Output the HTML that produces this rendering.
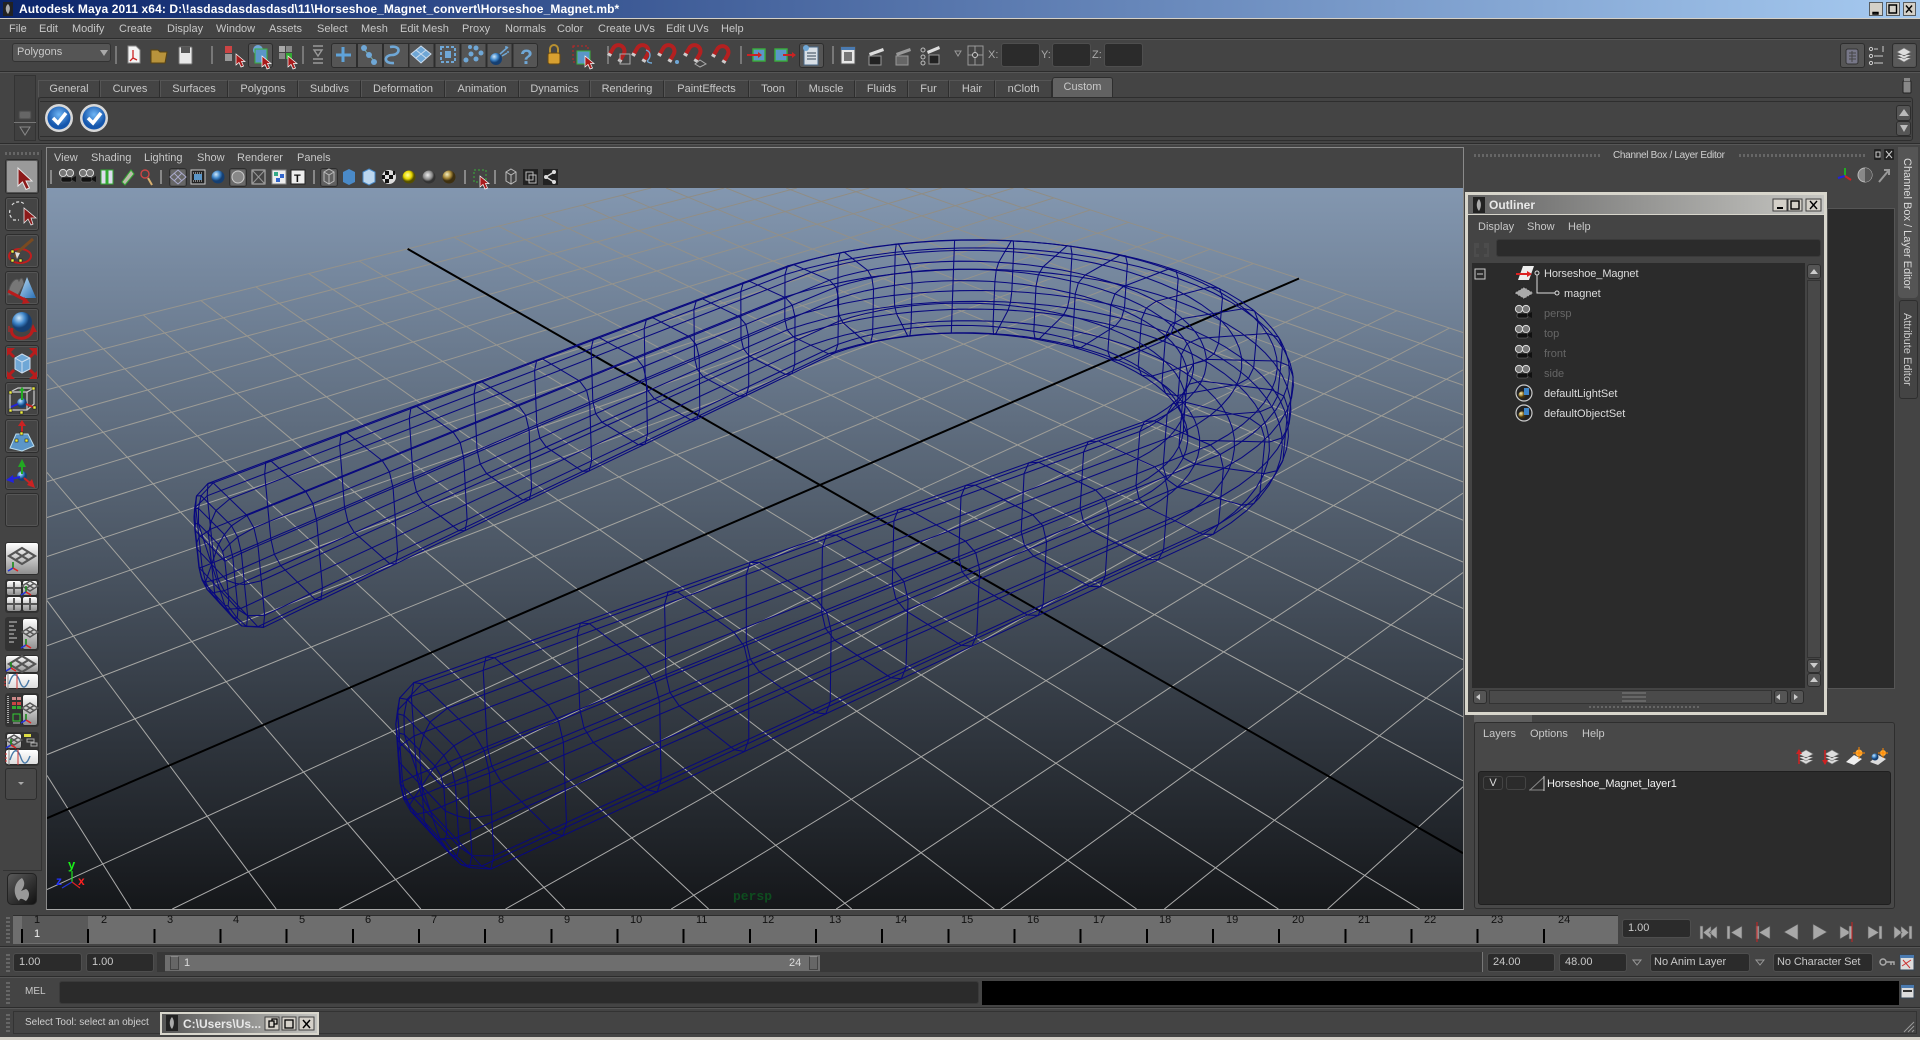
<!DOCTYPE html>
<html><head><meta charset="utf-8"><title>Autodesk Maya 2011</title>
<style>
html,body{margin:0;padding:0;background:#444;width:1920px;height:1040px;overflow:hidden}
body{position:relative;font:11px/14px "Liberation Sans",sans-serif;color:#c8c8c8}
.a,.t,.f,.b,.tab,.w{position:absolute;box-sizing:border-box}
.t{white-space:pre;line-height:14px}
.f{background:#2b2b2b;border:1px solid #4e4e4e;border-radius:3px;color:#c8c8c8;padding-left:5px;line-height:17px}
.b{background:#444;border:1px solid #2d2d2d;border-radius:3px;box-shadow:inset 0 0 0 1px #555}
.w{background:linear-gradient(#fff,#8f8f8f);border:1px solid #2d2d2d;border-radius:3px}
.tab{top:80px;height:17px;text-align:center;line-height:16px;border-right:1px solid #2e2e2e;border-left:1px solid #555;border-top:1px solid #555}
.gx{background:repeating-linear-gradient(90deg,#666 0 2px,transparent 2px 4px)}
.gy{background:repeating-linear-gradient(0deg,#666 0 2px,transparent 2px 4px)}
.hl{left:0;width:1920px;height:1px;background:#2c2c2c;box-shadow:0 1px 0 #565656}
</style></head><body>
<!-- title bar -->
<div class="a" style="left:0;top:0;width:1920px;height:18px;background:linear-gradient(90deg,#0a246a,#a6caf0)"></div>
<div class="a" style="left:0;top:18px;width:1920px;height:1px;background:#d4d0c8"></div>
<div class="t" style="left:19px;top:2px;color:#fff;font-weight:bold;font-size:12px;letter-spacing:.095px">Autodesk Maya 2011 x64: D:\!asdasdasdasdasd\11\Horseshoe_Magnet_convert\Horseshoe_Magnet.mb*</div>
<!-- menu -->
<div class="t" style="left:9px;top:22px">File</div><div class="t" style="left:39px;top:22px">Edit</div><div class="t" style="left:72px;top:22px">Modify</div><div class="t" style="left:119px;top:22px">Create</div><div class="t" style="left:167px;top:22px">Display</div><div class="t" style="left:216px;top:22px">Window</div><div class="t" style="left:269px;top:22px">Assets</div><div class="t" style="left:317px;top:22px">Select</div><div class="t" style="left:361px;top:22px">Mesh</div><div class="t" style="left:400px;top:22px">Edit Mesh</div><div class="t" style="left:462px;top:22px">Proxy</div><div class="t" style="left:505px;top:22px">Normals</div><div class="t" style="left:557px;top:22px">Color</div><div class="t" style="left:598px;top:22px">Create UVs</div><div class="t" style="left:666px;top:22px">Edit UVs</div><div class="t" style="left:721px;top:22px">Help</div>
<div class="a hl" style="top:38px"></div>
<div class="a hl" style="top:71px"></div>
<div class="a hl" style="top:143px"></div>
<!-- toolbar -->
<div class="f" style="left:12px;top:43px;width:99px;height:19px;background:#555;border-color:#333;line-height:16px;padding-left:4px">Polygons</div>
<div class="b" style="left:248px;top:43px;width:25px;height:25px;background:#555"></div>
<div class="b" style="left:331px;top:43px;width:207px;height:25px;background:repeating-linear-gradient(90deg,#555 0 24px,#2d2d2d 24px 25.9px);box-shadow:none"></div>
<div class="b" style="left:799px;top:43px;width:25px;height:25px;background:#555"></div>
<div class="t" style="left:988px;top:48px;color:#aaa">X:</div><div class="f" style="left:1001px;top:43px;width:39px;height:24px"></div>
<div class="t" style="left:1041px;top:48px;color:#aaa">Y:</div><div class="f" style="left:1052px;top:43px;width:39px;height:24px"></div>
<div class="t" style="left:1092px;top:48px;color:#aaa">Z:</div><div class="f" style="left:1104px;top:43px;width:39px;height:24px"></div>
<div class="b" style="left:1840px;top:43px;width:25px;height:25px;background:#555"></div>
<div class="b" style="left:1892px;top:43px;width:25px;height:25px;background:#5a5a5a"></div>
<!-- shelf -->
<div class="tab" style="left:38px;width:62px">General</div><div class="tab" style="left:100px;width:60px">Curves</div><div class="tab" style="left:160px;width:68px">Surfaces</div><div class="tab" style="left:228px;width:70px">Polygons</div><div class="tab" style="left:298px;width:63px">Subdivs</div><div class="tab" style="left:361px;width:84px">Deformation</div><div class="tab" style="left:445px;width:74px">Animation</div><div class="tab" style="left:519px;width:71px">Dynamics</div><div class="tab" style="left:590px;width:74px">Rendering</div><div class="tab" style="left:664px;width:85px">PaintEffects</div><div class="tab" style="left:749px;width:48px">Toon</div><div class="tab" style="left:797px;width:58px">Muscle</div><div class="tab" style="left:855px;width:53px">Fluids</div><div class="tab" style="left:908px;width:41px">Fur</div><div class="tab" style="left:949px;width:46px">Hair</div><div class="tab" style="left:995px;width:57px">nCloth</div>
<div class="tab" style="left:1052px;top:77px;height:20px;width:61px;background:#626262;border:1px solid #2e2e2e;border-bottom:0;border-radius:3px 3px 0 0;line-height:18px">Custom</div>
<div class="a" style="left:38px;top:97px;width:1875px;height:44px;border:1px solid #2e2e2e;border-radius:3px;box-sizing:border-box"></div>
<div class="a" style="left:40px;top:101px;width:1871px;height:36px;border-top:1px solid #2e2e2e;border-bottom:1px solid #2e2e2e;box-sizing:border-box;background:#444"></div>
<div class="a" style="left:14px;top:75px;width:22px;height:66px;border:1px solid #333;box-sizing:border-box;background:#404040"></div>
<div class="b" style="left:18px;top:110px;width:14px;height:10px;background:#666;border-color:#444"></div>
<div class="a" style="left:14px;top:122px;width:22px;height:1px;background:#777"></div>
<div class="b" style="left:1896px;top:105px;width:15px;height:16px;background:#555"></div>
<div class="b" style="left:1896px;top:121px;width:15px;height:15px;background:#555"></div>
<!-- view panel -->
<div class="a" style="left:46px;top:147px;width:1418px;height:763px;border:1px solid #8a8a8a;box-sizing:border-box;border-bottom-color:#a8a8a8;background:#444"></div>
<div class="t" style="left:54px;top:151px">View</div><div class="t" style="left:91px;top:151px">Shading</div><div class="t" style="left:144px;top:151px">Lighting</div><div class="t" style="left:197px;top:151px">Show</div><div class="t" style="left:237px;top:151px">Renderer</div><div class="t" style="left:297px;top:151px">Panels</div>
<div class="b" style="left:169px;top:168px;width:18px;height:19px;background:#666"></div>
<div class="b" style="left:229px;top:168px;width:18px;height:19px;background:#6a6a6a"></div>
<div class="b" style="left:320px;top:168px;width:18px;height:19px;background:#606060"></div>
<div class="a" id="vpbg" style="left:47px;top:188px;width:1416px;height:721px;background:linear-gradient(#8397b0,#15171a)"></div>
<svg class="a" id="vp" style="left:47px;top:188px" width="1416" height="721" viewBox="47 188 1416 721" xmlns="http://www.w3.org/2000/svg">
<defs><linearGradient id="gl" gradientUnits="userSpaceOnUse" x1="0" y1="188" x2="0" y2="909"><stop offset="0" stop-color="#8f8c84"/><stop offset=".45" stop-color="#a3a39e"/><stop offset="1" stop-color="#ababab"/></linearGradient></defs>
<g id="grid" fill="none" stroke="url(#gl)" stroke-width="1"></g>
<g id="axes" fill="none" stroke="#000" stroke-width="2"></g>
<g id="wire" fill="none" stroke="#08087e" stroke-width="1.05"></g>
<text x="733" y="900" fill="#0e4d1f" font-family="Liberation Mono,monospace" font-size="13" font-weight="bold">persp</text>
<path d="M72 882V871" stroke="#1fe01f" stroke-width="1.2"/><path d="M72 882L62 888" stroke="#2233dd" stroke-width="1.2"/><path d="M72 882L80 888" stroke="#dd2222" stroke-width="1.2"/>
<text x="68" y="869" fill="#19ee19" font-family="Liberation Sans,sans-serif" font-weight="bold" font-size="13">y</text><text x="56" y="885" fill="#2233ff" font-family="Liberation Sans,sans-serif" font-weight="bold" font-size="12">z</text><text x="78" y="885" fill="#ff2020" font-family="Liberation Sans,sans-serif" font-weight="bold" font-size="12">x</text>
</svg>
<!-- left toolbox -->
<div class="a" style="left:3px;top:150px;width:39px;height:721px;border-right:1px solid #333;border-bottom:1px solid #333;box-sizing:border-box"></div>
<div class="a gx" style="left:5px;top:152px;width:34px;height:3px"></div>
<div class="b" style="left:5px;top:159px;width:34px;height:35px;background:#9a9a9a"></div>
<div class="b" style="left:5px;top:197px;width:34px;height:34px"></div><div class="b" style="left:5px;top:234px;width:34px;height:34px"></div><div class="b" style="left:5px;top:271px;width:34px;height:34px"></div><div class="b" style="left:5px;top:308px;width:34px;height:34px"></div><div class="b" style="left:5px;top:345px;width:34px;height:34px"></div><div class="b" style="left:5px;top:382px;width:34px;height:34px"></div><div class="b" style="left:5px;top:419px;width:34px;height:34px"></div><div class="b" style="left:5px;top:456px;width:34px;height:34px"></div><div class="b" style="left:5px;top:493px;width:34px;height:34px"></div>
<div class="w" style="left:5px;top:542px;width:34px;height:33px"></div>
<div class="a" style="left:5px;top:579px;width:34px;height:34px;background:#333;border-radius:3px"></div>
<div class="w" style="left:6px;top:580px;width:16px;height:16px"></div><div class="w" style="left:22px;top:580px;width:16px;height:16px"></div><div class="w" style="left:6px;top:596px;width:16px;height:16px"></div><div class="w" style="left:22px;top:596px;width:16px;height:16px"></div>
<div class="a" style="left:5px;top:617px;width:34px;height:34px;background:#333;border-radius:3px"></div>
<div class="w" style="left:22px;top:618px;width:16px;height:32px"></div>
<div class="w" style="left:5px;top:655px;width:34px;height:18px"></div><div class="w" style="left:5px;top:673px;width:34px;height:16px;background:linear-gradient(#fff,#ddd)"></div>
<div class="a" style="left:5px;top:693px;width:34px;height:34px;background:#333;border-radius:3px"></div>
<div class="w" style="left:22px;top:694px;width:16px;height:32px"></div>
<div class="a" style="left:5px;top:732px;width:34px;height:34px;background:#333;border-radius:3px"></div>
<div class="w" style="left:6px;top:733px;width:16px;height:16px"></div><div class="w" style="left:5px;top:749px;width:34px;height:16px;background:linear-gradient(#fff,#ddd)"></div>
<div class="b" style="left:5px;top:768px;width:32px;height:32px;box-shadow:none;background:#484848"></div>
<div class="a" style="left:7px;top:873px;width:30px;height:32px;border-radius:5px;background:linear-gradient(135deg,#5a5a5a,#111);border:1px solid #222;box-sizing:border-box"></div>
<!-- right dock -->
<div class="a gx" style="left:1474px;top:154px;width:126px;height:3px"></div><div class="a gx" style="left:1739px;top:154px;width:126px;height:3px"></div>
<div class="t" style="left:1613px;top:149px;color:#d0d0d0;font-size:10px;letter-spacing:-.3px">Channel Box / Layer Editor</div>
<div class="a" style="left:1898px;top:147px;width:20px;height:151px;background:#555;border-radius:0 0 4px 4px"></div>
<div class="t" style="left:1900px;top:158px;writing-mode:vertical-rl;color:#ddd">Channel Box / Layer Editor</div>
<div class="a" style="left:1899px;top:300px;width:19px;height:99px;border:1px solid #2e2e2e;border-radius:3px;box-sizing:border-box"></div>
<div class="t" style="left:1900px;top:313px;writing-mode:vertical-rl;color:#ccc">Attribute Editor</div>
<div class="a" style="left:1827px;top:208px;width:68px;height:481px;background:#2b2b2b;border:1px solid #555;box-sizing:border-box"></div>
<div class="a" style="left:1474px;top:722px;width:421px;height:187px;border:1px solid #2e2e2e;border-radius:3px;box-sizing:border-box;background:#484848"></div>
<div class="a" style="left:1474px;top:715px;width:58px;height:7px;background:#5e5e5e"></div>
<div class="t" style="left:1483px;top:727px">Layers</div><div class="t" style="left:1530px;top:727px">Options</div><div class="t" style="left:1582px;top:727px">Help</div>
<div class="a" style="left:1478px;top:771px;width:413px;height:134px;background:#2b2b2b;border:1px solid #1f1f1f;border-radius:3px;box-sizing:border-box"></div>
<div class="a" style="left:1483px;top:776px;width:20px;height:14px;border:1px solid #444;border-radius:3px;box-sizing:border-box;text-align:center;line-height:12px;color:#ddd">V</div>
<div class="a" style="left:1506px;top:776px;width:20px;height:14px;border:1px solid #444;border-radius:3px;box-sizing:border-box"></div>
<div class="t" style="left:1547px;top:777px;color:#f0f0f0;letter-spacing:-.1px">Horseshoe_Magnet_layer1</div>
<!-- outliner -->
<div class="a" style="left:1465px;top:192px;width:362px;height:523px;background:#444;border:3px solid #d8d6cc;box-sizing:border-box"></div>
<div class="a" style="left:1468px;top:195px;width:356px;height:20px;background:linear-gradient(90deg,#666,#c6c6c2);border-bottom:1px solid #d8d6cc;box-sizing:border-box"></div>
<div class="t" style="left:1489px;top:198px;font-weight:bold;font-size:12px;color:#e8e8e8">Outliner</div>
<div class="t" style="left:1478px;top:220px">Display</div><div class="t" style="left:1527px;top:220px">Show</div><div class="t" style="left:1568px;top:220px">Help</div>
<div class="f" style="left:1496px;top:239px;width:325px;height:18px;border-color:#3a3a3a"></div>
<div class="a" style="left:1472px;top:263px;width:333px;height:425px;background:#2b2b2b"></div>
<div class="t" style="left:1544px;top:267px;color:#ddd;letter-spacing:-.1px">Horseshoe_Magnet</div>
<div class="t" style="left:1564px;top:287px;color:#ddd">magnet</div>
<div class="t" style="left:1544px;top:307px;color:#666">persp</div>
<div class="t" style="left:1544px;top:327px;color:#666">top</div>
<div class="t" style="left:1544px;top:347px;color:#666">front</div>
<div class="t" style="left:1544px;top:367px;color:#666">side</div>
<div class="t" style="left:1544px;top:387px;color:#ddd">defaultLightSet</div>
<div class="t" style="left:1544px;top:407px;color:#ddd">defaultObjectSet</div>
<div class="b" style="left:1807px;top:264px;width:14px;height:15px;background:#555"></div>
<div class="a" style="left:1807px;top:280px;width:14px;height:378px;background:#484848;border:1px solid #333;box-sizing:border-box"></div>
<div class="b" style="left:1807px;top:659px;width:14px;height:14px;background:#555"></div>
<div class="b" style="left:1807px;top:673px;width:14px;height:14px;background:#555"></div>
<div class="b" style="left:1473px;top:690px;width:14px;height:14px;background:#555"></div>
<div class="a" style="left:1489px;top:690px;width:283px;height:14px;background:#4a4a4a;border:1px solid #333;box-sizing:border-box"></div>
<div class="b" style="left:1774px;top:690px;width:14px;height:14px;background:#555"></div>
<div class="b" style="left:1790px;top:690px;width:14px;height:14px;background:#555"></div>
<div class="a gx" style="left:1589px;top:706px;width:112px;height:2px"></div>
<!-- time slider -->
<div class="a gy" style="left:6px;top:915px;width:4px;height:28px"></div>
<div class="a" style="left:13px;top:915px;width:1605px;height:29px;background:#6e6e6e;border-top:1px solid #2e2e2e;box-sizing:border-box"></div>
<div class="a" style="left:22px;top:916px;width:66px;height:27px;background:#595959"></div>
<div class="a" style="left:21px;top:929px;width:1526px;height:14px;background:repeating-linear-gradient(90deg,#000 0 2px,transparent 2px 66.17px)"></div>
<div class="t" style="left:34px;top:913px;color:#111">1</div><div class="t" style="left:101px;top:913px;color:#111">2</div><div class="t" style="left:167px;top:913px;color:#111">3</div><div class="t" style="left:233px;top:913px;color:#111">4</div><div class="t" style="left:299px;top:913px;color:#111">5</div><div class="t" style="left:365px;top:913px;color:#111">6</div><div class="t" style="left:431px;top:913px;color:#111">7</div><div class="t" style="left:498px;top:913px;color:#111">8</div><div class="t" style="left:564px;top:913px;color:#111">9</div><div class="t" style="left:630px;top:913px;color:#111">10</div><div class="t" style="left:696px;top:913px;color:#111">11</div><div class="t" style="left:762px;top:913px;color:#111">12</div><div class="t" style="left:829px;top:913px;color:#111">13</div><div class="t" style="left:895px;top:913px;color:#111">14</div><div class="t" style="left:961px;top:913px;color:#111">15</div><div class="t" style="left:1027px;top:913px;color:#111">16</div><div class="t" style="left:1093px;top:913px;color:#111">17</div><div class="t" style="left:1159px;top:913px;color:#111">18</div><div class="t" style="left:1226px;top:913px;color:#111">19</div><div class="t" style="left:1292px;top:913px;color:#111">20</div><div class="t" style="left:1358px;top:913px;color:#111">21</div><div class="t" style="left:1424px;top:913px;color:#111">22</div><div class="t" style="left:1491px;top:913px;color:#111">23</div><div class="t" style="left:1558px;top:913px;color:#111">24</div>
<div class="t" style="left:34px;top:927px;color:#f0f0f0">1</div>
<div class="f" style="left:1622px;top:919px;width:69px;height:19px">1.00</div>
<div class="a hl" style="top:946px"></div>
<!-- range row -->
<div class="a gy" style="left:6px;top:952px;width:4px;height:20px"></div>
<div class="f" style="left:13px;top:953px;width:69px;height:19px">1.00</div>
<div class="f" style="left:86px;top:953px;width:68px;height:19px">1.00</div>
<div class="a" style="left:157px;top:952px;width:1326px;height:20px;background:#383838;border-right:1px solid #777;box-sizing:border-box"></div>
<div class="a" style="left:165px;top:955px;width:655px;height:17px;background:#6e6e6e;border-bottom:1px solid #444;box-sizing:border-box"></div>
<div class="a" style="left:170px;top:956px;width:9px;height:14px;background:#666;border:1px solid #444;border-top-color:#888;box-sizing:border-box"></div>
<div class="a" style="left:809px;top:956px;width:9px;height:14px;background:#666;border:1px solid #444;border-top-color:#888;box-sizing:border-box"></div>
<div class="t" style="left:184px;top:956px;color:#ddd">1</div>
<div class="t" style="left:789px;top:956px;color:#ddd">24</div>
<div class="f" style="left:1487px;top:953px;width:68px;height:19px">24.00</div>
<div class="f" style="left:1559px;top:953px;width:68px;height:19px">48.00</div>
<div class="f" style="left:1650px;top:953px;width:100px;height:19px;padding-left:3px">No Anim Layer</div>
<div class="f" style="left:1773px;top:953px;width:100px;height:19px;padding-left:3px;letter-spacing:-.1px">No Character Set</div>
<div class="a hl" style="top:976px"></div>
<!-- MEL -->
<div class="a gy" style="left:6px;top:981px;width:4px;height:23px"></div>
<div class="t" style="left:25px;top:985px;font-size:10px">MEL</div>
<div class="f" style="left:59px;top:981px;width:920px;height:23px;border-color:#3a3a3a"></div>
<div class="a" style="left:982px;top:981px;width:917px;height:24px;background:#000"></div>
<div class="a hl" style="top:1007px"></div>
<!-- status -->
<div class="a gy" style="left:6px;top:1012px;width:4px;height:20px"></div>
<div class="a" style="left:13px;top:1011px;width:1904px;height:23px;border:1px solid #333;box-sizing:border-box"></div>
<div class="t" style="left:25px;top:1016px;color:#d0d0d0;font-size:10px">Select Tool: select an object</div>
<div class="a" style="left:160px;top:1012px;width:159px;height:23px;border:2px solid #d8d6cc;box-sizing:border-box;background:linear-gradient(90deg,#555,#c4c4c0)"></div>
<div class="t" style="left:183px;top:1017px;font-weight:bold;font-size:12px;color:#e8e8e8">C:\Users\Us...</div>
<div class="a" style="left:0;top:1037px;width:1920px;height:3px;background:#d4d0c8"></div>

<!-- icon overlay -->
<svg class="a" style="left:0;top:0" width="1920" height="1040" xmlns="http://www.w3.org/2000/svg">
<defs>
<linearGradient id="gb" x1="0" y1="0" x2="1" y2="1"><stop offset="0" stop-color="#bfe0f7"/><stop offset="1" stop-color="#2a6fb4"/></linearGradient>
<radialGradient id="sb" cx=".35" cy=".3"><stop offset="0" stop-color="#cfe8fb"/><stop offset=".6" stop-color="#3f86c9"/><stop offset="1" stop-color="#153f72"/></radialGradient>
<radialGradient id="sg" cx=".35" cy=".3"><stop offset="0" stop-color="#f5efc0"/><stop offset=".6" stop-color="#a88a3a"/><stop offset="1" stop-color="#3e3010"/></radialGradient>
<radialGradient id="sy" cx=".4" cy=".35"><stop offset="0" stop-color="#ffffa0"/><stop offset=".6" stop-color="#e8d800"/><stop offset="1" stop-color="#554f00"/></radialGradient>
<radialGradient id="sw" cx=".4" cy=".35"><stop offset="0" stop-color="#eee"/><stop offset=".7" stop-color="#888"/><stop offset="1" stop-color="#333"/></radialGradient>
<radialGradient id="chk" cx=".5" cy=".35"><stop offset="0" stop-color="#6fb6f5"/><stop offset="1" stop-color="#1657ad"/></radialGradient>
<g id="cur"><path d="M0 0V11L3 8.5 5 13 7.5 12 5.5 7.5H9Z" fill="#a81c1c" stroke="#fff" stroke-width=".7"/></g>
<g id="bcur"><path d="M-6 -10V8L-1.5 4 2 11.5 5.5 10 2 3H8Z" fill="#8c1a1a" stroke="#e8e8e8" stroke-width="1"/></g>
<g id="mag"><g transform="rotate(30)"><path d="M-6 7V-1A6 6 0 0 1 6 -1V7" fill="none" stroke="#b42020" stroke-width="4"/><path d="M-8 5H-4V8H-8ZM4 5H8V8H4Z" fill="#ccc"/></g></g>
<g id="cam"><circle cx="-4" cy="-4" r="3.6" fill="#777" stroke="#ddd"/><circle cx="3" cy="-4" r="3.6" fill="#777" stroke="#ddd"/><rect x="-6" y="0" width="11" height="5" rx="2" fill="#111" stroke="#777" stroke-width=".6"/><path d="M5 1L9 -1V5L5 3Z" fill="#111"/></g>
<g id="set"><circle r="8" fill="#222" stroke="#ccc" stroke-width="1.2"/><circle cx="-2" cy="2" r="3.6" fill="url(#sg)"/><rect x="0" y="-5" width="5" height="7" fill="#3f86c9"/></g>
<g id="dia"><path d="M0 -8L13 0 0 8 -13 0Z M-6.5 -4L6.5 4M6.5 -4L-6.5 4" fill="none" stroke="#555" stroke-width="2.2"/></g>
<g id="sdia"><path d="M0 -5L8 0 0 5 -8 0Z M-4 -2.5L4 2.5M4 -2.5L-4 2.5" fill="none" stroke="#555" stroke-width="1.4"/></g>
<g id="xyz"><path d="M0 0V-6" stroke="#1a8a1a" stroke-width="1.6"/><path d="M0 0L-5 3" stroke="#2233dd" stroke-width="1.6"/><path d="M0 0L5 3" stroke="#dd2222" stroke-width="1.6"/></g>
<g id="plus"><path d="M0 -6V6M-7 0H7" stroke="#555" stroke-width="2"/></g>
<g id="curve"><path d="M-4 -8V8" stroke="#888" stroke-width="1"/><path d="M-8 -3H-6M-8 1H-6M-8 4H-6" stroke="#d33" stroke-width="1"/><path d="M-3 3C1 -10 5 -8 8 1 11 9 14 7 17 -1" fill="none" stroke="#4a7aa8" stroke-width="1.4"/><path d="M5 -8V8" stroke="#c33" stroke-width="1"/></g>
<g id="layer"><path d="M-7 -3L0 -7 7 -3 0 1Z M-7 0L0 4 7 0 M-7 3L0 7 7 3" fill="#ddd" stroke="#777" stroke-width=".7"/></g>
</defs>
<!-- titlebar -->
<rect x="3" y="2" width="10" height="14" fill="#222"/><path d="M8 4C5 6 5 11 8 14 10 11 11 7 8 4Z" fill="#aaa"/>
<g fill="#d4d0c8" stroke="#404040" stroke-width=".8"><rect x="1869.5" y="2.5" width="13" height="13"/><rect x="1886.5" y="2.5" width="13" height="13"/><rect x="1903.5" y="2.5" width="12" height="13"/></g>
<path d="M1873 12.5h5v1.6h-5zM1889 5v8h7.5v-8z M1906 5.5l6 7 M1912 5.5l-6 7" fill="none" stroke="#000" stroke-width="1.4"/>
<!-- toolbar -->
<path d="M103 50l4 6 4-6z" transform="translate(-3 0)" fill="#aaa"/>
<g fill="#777"><rect x="115" y="46" width="2" height="18"/><rect x="211" y="46" width="2" height="18"/><rect x="302" y="46" width="2" height="18"/><rect x="607" y="46" width="2" height="18"/><rect x="740" y="46" width="2" height="18"/><rect x="832" y="46" width="2" height="18"/></g>
<path d="M128 46h8l4 4v13h-12z" fill="#f4f4f4" stroke="#888"/><path d="M133 50v8l-3 3M133 58l4 2" fill="none" stroke="#c22" stroke-width="1.3"/>
<path d="M151 50h7l2 2h7l-2 11h-14z" fill="#b8933c" stroke="#5a4310"/>
<rect x="179" y="47" width="13" height="17" rx="1" fill="#e8e8e8" stroke="#777"/><rect x="181" y="47" width="9" height="6" fill="#555"/>
<rect x="225" y="46" width="7" height="7" fill="#c44"/><rect x="225" y="54" width="7" height="7" fill="#999"/><use href="#cur" x="236" y="54"/>
<circle cx="258" cy="50" r="5" fill="#6fa7d6"/><rect x="255" y="49" width="12" height="14" fill="#5b96c8" stroke="#3ab03a"/><use href="#cur" x="262" y="56"/>
<rect x="279" y="46" width="6" height="6" fill="#aaa"/><rect x="286" y="46" width="6" height="6" fill="#888"/><rect x="279" y="53" width="6" height="6" fill="#888"/><rect x="286" y="53" width="6" height="6" fill="#3a3"/><use href="#cur" x="288" y="56"/>
<path d="M313 46h10M314 50l4 6 4-6zM313 59h10M313 63h10" stroke="#999" fill="none" stroke-width="1.4"/>
<path d="M343 47v15M336 55h15" stroke="#5fa2d8" stroke-width="3"/>
<path d="M363 48l12 14" stroke="#7aa"/><circle cx="364" cy="48" r="3" fill="#6fa7d6"/><circle cx="369" cy="55" r="3" fill="#6fa7d6"/><circle cx="374" cy="62" r="3" fill="#6fa7d6"/>
<path d="M390 47c12-2 10 8 2 8s-9 9 2 8" fill="none" stroke="#6fa7d6" stroke-width="2.6"/>
<path d="M421 46l10 8-10 9-10-9z M416 50l10 8M426 50l-10 8" fill="#6fa7d6" stroke="#cde"/>
<rect x="441" y="47" width="14" height="15" fill="none" stroke="#6fa7d6" stroke-width="2" stroke-dasharray="3 2"/><rect x="445" y="51" width="6" height="7" fill="#6fa7d6"/>
<g fill="#6fa7d6"><circle cx="466" cy="60" r="2.5"/><circle cx="471" cy="54" r="2.5"/><circle cx="476" cy="48" r="2.5"/><circle cx="476" cy="59" r="2.5"/><circle cx="481" cy="53" r="2.5"/><circle cx="470" cy="47" r="2"/></g>
<circle cx="496" cy="59" r="6" fill="url(#sb)"/><path d="M500 54l8-7M502 56l5-3M505 47h2M507 52h2" stroke="#6fa7d6" stroke-width="1.6"/>
<text x="520" y="64" font-family="Liberation Sans,sans-serif" font-size="21" font-weight="bold" fill="#6fa7d6">?</text>
<path d="M550 53v-4a4 4 0 0 1 8 0v4" fill="none" stroke="#b89030" stroke-width="2"/><rect x="548" y="53" width="12" height="11" rx="2" fill="#d8a030" stroke="#6a4a10"/>
<rect x="573" y="46" width="15" height="16" fill="none" stroke="#c22" stroke-dasharray="2 2"/><rect x="577" y="51" width="13" height="13" fill="#5b96c8" stroke="#3ab03a"/><use href="#cur" x="585" y="56"/>
<use href="#mag" x="618" y="52"/><rect x="620" y="54" width="10" height="10" fill="none" stroke="#aaa"/>
<use href="#mag" x="642" y="52"/><path d="M646 50c6 2 4 8 2 10s2 3 4 3" fill="none" stroke="#6fa7d6" stroke-width="1.4"/>
<use href="#mag" x="668" y="52"/><circle cx="677" cy="62" r="2" fill="#6fa7d6"/>
<use href="#mag" x="694" y="52"/><path d="M700 60l6 4-6 3-5-3z" fill="none" stroke="#aaa"/>
<use href="#mag" x="722" y="53"/>
<g><rect x="753" y="49" width="12" height="12" fill="#5b96c8" stroke="#3ab03a" stroke-width="1.4"/><path d="M747 55h13" stroke="#c22" stroke-width="2"/><path d="M758 52l4 3-4 3z" fill="#c22"/><rect x="775" y="49" width="12" height="12" fill="#5b96c8" stroke="#3ab03a" stroke-width="1.4"/><path d="M783 55h11" stroke="#c22" stroke-width="2"/><path d="M792 52l4 3-4 3z" fill="#c22"/></g>
<rect x="804" y="47" width="14" height="18" fill="#d8dfe6" stroke="#4a6a8a"/><circle cx="806" cy="48" r="3" fill="#6fa7d6"/><path d="M807 53h9M807 56h9M807 59h9" stroke="#345"/>
<rect x="841" y="47" width="14" height="17" fill="#e8e8e8" stroke="#555"/><rect x="841" y="47" width="14" height="3" fill="#4a7ab0"/><path d="M844 52h8v9h-8z" fill="#777"/>
<g transform="translate(876 55)"><path d="M-7 -2L7 -7 8 -4-6 1Z" fill="#ddd"/><rect x="-7" y="1" width="12" height="9" fill="#222" stroke="#999"/></g>
<g transform="translate(903 55)"><path d="M-7 -2L7 -7 8 -4-6 1Z" fill="#999"/><rect x="-7" y="1" width="12" height="9" fill="#666" stroke="#999"/></g>
<g transform="translate(930 55)"><path d="M-3 -4L9 -9 10 -6-2 -1Z" fill="#ddd"/><rect x="-1" y="0" width="10" height="9" fill="#222" stroke="#999"/><circle cx="-7" cy="-5" r="2" fill="none" stroke="#bbb"/><circle cx="-7" cy="2" r="2" fill="none" stroke="#bbb"/><circle cx="-7" cy="8" r="2" fill="none" stroke="#bbb"/></g>
<path d="M955 51l3 5 3-5zM960 51" fill="none" stroke="#999"/>
<rect x="968" y="46" width="15" height="19" fill="none" stroke="#999"/><path d="M975 46v19M968 55h15" stroke="#999"/><circle cx="975" cy="55" r="2.5" fill="#444" stroke="#ccc"/>
<rect x="1846" y="49" width="12" height="15" rx="2" fill="#778" stroke="#333"/><path d="M1849 53h7M1849 56h7M1849 59h7M1852 51v11" stroke="#444"/>
<g fill="none" stroke="#ccc"><circle cx="1871" cy="49" r="1.6"/><circle cx="1871" cy="56" r="1.6"/><circle cx="1871" cy="63" r="1.6"/><path d="M1874 49h4M1874 56h9M1874 63h9M1883 46v6"/></g>
<use href="#layer" x="1904" y="55"/>
<!-- shelf -->
<path d="M20 127l5 8 5-8z" fill="none" stroke="#888"/>
<path d="M1898 116l5-7 5 7zM1899 125l4 7 4-7z" fill="#bbb" transform="translate(1 0)"/>
<rect x="1903" y="81" width="8" height="12" rx="1" fill="#888" stroke="#222"/><rect x="1904" y="78" width="6" height="3" fill="#888"/>
<circle cx="59" cy="118" r="14.5" fill="#d8d8d8" stroke="#444"/><circle cx="59" cy="118" r="11.5" fill="url(#chk)"/><path d="M53 118l5 5 8-10" fill="none" stroke="#fff" stroke-width="3.5"/>
<circle cx="94" cy="118" r="14.5" fill="#d8d8d8" stroke="#444"/><circle cx="94" cy="118" r="11.5" fill="url(#chk)"/><path d="M88 118l5 5 8-10" fill="none" stroke="#fff" stroke-width="3.5"/>
<!-- panel icons -->
<g stroke="#999" stroke-width="0"><rect x="50" y="170" width="2" height="14" fill="#888"/><rect x="160" y="170" width="2" height="14" fill="#888"/><rect x="313" y="170" width="2" height="14" fill="#888"/><rect x="464" y="170" width="2" height="14" fill="#888"/><rect x="494" y="170" width="2" height="14" fill="#888"/></g>
<use href="#cam" x="67" y="177"/><use href="#cam" x="87" y="177"/>
<rect x="101" y="170" width="12" height="14" fill="#dde" stroke="#3a3"/><path d="M107 170v14" stroke="#3a3" stroke-width="3"/>
<path d="M122 182l9-12 3 4-9 11z" fill="#bba" stroke="#3a3"/>
<circle cx="145" cy="174" r="4" fill="none" stroke="#c44" stroke-width="1.4"/><path d="M148 178l4 7" stroke="#d8b070" stroke-width="2"/>
<path d="M178 170l8 7-8 7-8-7z M174 173l8 8M182 173l-8 8" fill="none" stroke="#aac"/>
<rect x="191" y="170" width="14" height="14" fill="#222" stroke="#ccc"/><path d="M193 173h10M193 181h10" stroke="#ddd" stroke-dasharray="1 1"/><rect x="194" y="174" width="8" height="6" fill="#5b96c8"/>
<circle cx="218" cy="177" r="6.5" fill="url(#sb)"/><circle cx="238" cy="177" r="6" fill="#888" stroke="#ccc"/>
<rect x="252" y="170" width="13" height="14" fill="#444" stroke="#bbb"/><path d="M252 170l13 14M265 170l-13 14" stroke="#999"/>
<rect x="272" y="170" width="14" height="14" fill="#eee" stroke="#888"/><rect x="274" y="172" width="4" height="4" fill="#3a8"/><rect x="280" y="174" width="4" height="4" fill="#36c"/><rect x="276" y="178" width="4" height="4" fill="#36c"/>
<rect x="291" y="170" width="14" height="14" fill="#eee" stroke="#222"/><text x="294" y="182" font-family="Liberation Sans,sans-serif" font-size="11" font-weight="bold" fill="#111">T</text>
<path d="M329 169l5 3v9l-5 3-5-3v-9z M324 172l5 3 5-3M329 175v9" fill="none" stroke="#bbb"/>
<path d="M349 169l6 3v10l-6 3-6-3v-10z" fill="#4a8ac8"/><path d="M369 169l6 3v10l-6 3-6-3v-10z" fill="#bcd7ef" stroke="#4a8ac8"/>
<circle cx="389" cy="177" r="7" fill="#ddd"/><g fill="#111"><rect x="385" y="171" width="4" height="4"/><rect x="389" y="175" width="4" height="4"/><rect x="385" y="179" width="4" height="4"/><rect x="393" y="171" width="2" height="4"/><rect x="382" y="175" width="3" height="4"/></g>
<circle cx="409" cy="177" r="6.5" fill="url(#sy)"/><circle cx="429" cy="177" r="6.5" fill="url(#sw)"/><circle cx="449" cy="177" r="6.5" fill="url(#sg)"/>
<rect x="474" y="170" width="12" height="12" fill="none" stroke="#3ab03a" stroke-dasharray="2 2"/><use href="#cur" x="480" y="176"/>
<g fill="none" stroke="#bbb"><path d="M511 169l5 3v9l-5 3-5-3v-9z M506 172l5 3 5-3M511 175v9"/></g><rect x="523" y="169" width="15" height="16" fill="#222"/><rect x="526" y="172" width="7" height="8" fill="none" stroke="#bbb"/><rect x="529" y="175" width="7" height="8" fill="none" stroke="#bbb"/><rect x="543" y="169" width="15" height="16" fill="#222"/><path d="M546 177l8-5M546 177l8 5" stroke="#ddd" stroke-width="1.4"/><circle cx="546" cy="177" r="2" fill="#ddd"/><circle cx="554" cy="172" r="2" fill="#ddd"/><circle cx="554" cy="182" r="2" fill="#ddd"/>
<!-- toolbox -->
<use href="#bcur" x="24" y="178"/>
<g transform="translate(0 197)"><path d="M12 8c3-4 10-4 12-1M10 13c-1 3 0 7 3 9M13 23h6" fill="none" stroke="#ddd" stroke-width="1.2" stroke-dasharray="3 2"/><path d="M24 11V26L28 22 31 28 33 27 31 21H36Z" fill="#8c1a1a" stroke="#e8e8e8" stroke-width=".8"/></g>
<g transform="translate(0 234)"><ellipse cx="20" cy="22" rx="11" ry="7" fill="none" stroke="#c01e1e" stroke-width="2"/><path d="M15 23l4-6 14-12" stroke="#7a4a20" stroke-width="3" fill="none"/><path d="M15 18l5 1-3 6z" fill="#ddd"/><g fill="#ee4" stroke="#111" stroke-width=".5"><rect x="11" y="16" width="3" height="3"/><rect x="11" y="25" width="3" height="3"/><rect x="19" y="25" width="3" height="3"/></g></g>
<g transform="translate(0 271)"><path d="M8 24C10 8 18 6 19 10c2-4 4-4 5 3L18 24Z" fill="#777" stroke="#555"/><path d="M27 6L36 27H19Z" fill="url(#gb)"/><path d="M8 20L27 30" stroke="#b81c1c" stroke-width="3"/><path d="M24 26L30 32 22 33Z" fill="#b81c1c"/></g>
<g transform="translate(0 308)"><circle cx="22" cy="14" r="10" fill="url(#sb)"/><path d="M12 20C8 32 30 35 33 21" fill="none" stroke="#b81c1c" stroke-width="3"/><path d="M9 18v6" stroke="#833" stroke-width="2"/><path d="M33 16l4 8h-7z" fill="#b81c1c"/></g>
<g transform="translate(0 345)"><path d="M15 13L22 9 30 13V24L22 28 15 24Z" fill="#6fa7d6" stroke="#cde"/><path d="M15 13L22 17 30 13M22 17V28" fill="none" stroke="#cde"/><g stroke="#b81c1c" stroke-width="3"><path d="M14 12L9 7M30 12L35 7M14 25L9 30M30 25L35 30"/></g><g fill="#b81c1c"><path d="M7 3H15L7 11Z"/><path d="M37 3H29L37 11Z"/><path d="M7 34H15L7 26Z"/><path d="M37 34H29L37 26Z"/></g></g>
<g transform="translate(0 382)"><path d="M10 10L18 6H34V22L27 28H10Z M10 10H27V28M27 10L34 6" fill="none" stroke="#ccc" stroke-width="1.2"/><circle cx="22" cy="21" r="5" fill="url(#sb)"/><path d="M22 18V8" stroke="#2a2" stroke-width="2"/><path d="M19 9L22 5 25 9Z" fill="#2a2"/><path d="M18 22L11 25" stroke="#22d" stroke-width="2"/><path d="M26 22L33 25" stroke="#c22" stroke-width="2"/><g fill="#ee4" stroke="#111" stroke-width=".5"><rect x="9" y="9" width="3" height="3"/><rect x="32" y="5" width="3" height="3"/><rect x="9" y="27" width="3" height="3"/><rect x="20" y="29" width="3" height="3"/><rect x="33" y="24" width="3" height="3"/></g></g>
<g transform="translate(0 419)"><path d="M10 29L16 15H28L34 27 22 32Z" fill="#5b96c8" stroke="#bde"/><path d="M22 16V4" stroke="#c22" stroke-width="2"/><path d="M18 7L22 1 26 7Z" fill="#c22"/><g fill="#ee4" stroke="#111" stroke-width=".5"><rect x="20" y="13" width="3" height="3"/><rect x="15" y="20" width="3" height="3"/><rect x="25" y="20" width="3" height="3"/></g></g>
<g transform="translate(0 456)"><circle cx="22" cy="20" r="5" fill="url(#sb)"/><path d="M22 18V8" stroke="#2a2" stroke-width="2"/><path d="M18 11L22 3 26 11Z" fill="#2a2"/><path d="M20 21L11 23" stroke="#22d" stroke-width="2"/><path d="M13 19L6 24 14 27Z" fill="#22d"/><path d="M24 22L30 27" stroke="#c22" stroke-width="2"/><path d="M27 29L35 32 32 23Z" fill="#c22"/></g>
<!-- layout buttons -->
<use href="#dia" x="22" y="556"/><use href="#xyz" x="13" y="568"/>
<use href="#plus" x="14" y="588"/><use href="#sdia" x="30" y="586"/><use href="#xyz" x="26" y="592"/><use href="#plus" x="14" y="604"/><use href="#plus" x="30" y="604"/>
<path d="M9 622h8M9 626h5M9 630h7M9 634h5M9 638h8M9 642h5" stroke="#ccc"/><use href="#sdia" x="30" y="632"/><use href="#xyz" x="26" y="645"/>
<use href="#dia" x="22" y="664"/><use href="#xyz" x="11" y="668"/><use href="#curve" x="12" y="681"/>
<g fill="#c88"><rect x="12" y="697" width="4" height="3"/><rect x="17" y="697" width="4" height="3"/></g><g fill="#c44"><rect x="12" y="702" width="4" height="3"/><rect x="17" y="702" width="4" height="3"/></g><g fill="#3a3"><rect x="12" y="706" width="4" height="3"/><rect x="17" y="706" width="4" height="3"/></g><rect x="13" y="714" width="7" height="7" fill="none" stroke="#3c3"/><path d="M13 723h7" stroke="#bbb"/><path d="M8 696v28" stroke="#aaa" stroke-width="2" stroke-dasharray="1 1"/><use href="#sdia" x="30" y="708"/><use href="#xyz" x="26" y="720"/>
<use href="#sdia" x="14" y="740"/><use href="#xyz" x="11" y="745"/><rect x="24" y="734" width="7" height="3" fill="#dd4"/><rect x="27" y="739" width="7" height="3" fill="none" stroke="#aaa"/><rect x="31" y="743" width="6" height="3" fill="none" stroke="#aaa"/><use href="#curve" x="13" y="757"/>
<path d="M18 782l3 3 3-3z" fill="#aaa"/>
<path d="M22 878c-8 4-10 16-3 23 1-4 4-2 7 0 4-4 4-10 0-12l-5 2c3-4 5-8 1-13z" fill="#999"/>
<!-- channel box -->
<rect x="1874" y="149" width="7" height="11" rx="1" fill="#222"/><path d="M1876 152h4v5h-4z" fill="none" stroke="#ccc"/><rect x="1884" y="149" width="10" height="11" rx="1" fill="#222"/><path d="M1886 151l6 7M1892 151l-6 7" stroke="#ccc"/>
<path d="M1845 176v-8" stroke="#2a2" stroke-width="2"/><path d="M1845 176l-7 2" stroke="#22d" stroke-width="2"/><path d="M1845 176l6 4" stroke="#c22" stroke-width="2"/><circle cx="1865" cy="175" r="7" fill="#888" stroke="#bbb"/><path d="M1865 168a7 7 0 0 1 0 14z" fill="#555"/><path d="M1879 182l10-12M1884 170h5v5" stroke="#999" stroke-width="2" fill="none"/>
<!-- layer icons -->
<g transform="translate(1803 757)"><use href="#layer" x="3" y="0"/><path d="M-4 7V-7" stroke="#c22" stroke-width="1.6"/><path d="M-7 -3L-4 -8-1 -3Z" fill="#c22"/></g>
<g transform="translate(1829 757)"><use href="#layer" x="3" y="0"/><path d="M-4 -7V7" stroke="#c22" stroke-width="1.6"/><path d="M-7 3L-4 8-1 3Z" fill="#c22"/></g>
<path d="M1846 762l8-7 8 4-8 6z" fill="#eee"/><circle cx="1859" cy="753" r="3.5" fill="#fa3"/><path d="M1859 747v12M1853 753h12" stroke="#f80"/>
<path d="M1870 762l8-7 8 4-8 6z" fill="#ddd"/><circle cx="1875" cy="757" r="3.5" fill="url(#sb)"/><circle cx="1883" cy="753" r="3" fill="#fa3"/><path d="M1883 748v10M1878 753h10" stroke="#f80"/>
<path d="M1530 790l14-13M1529 790h15" stroke="#888" fill="none"/><path d="M1544 776v15" stroke="#ccc"/>
<!-- outliner icons -->
<rect x="1473" y="197" width="12" height="16" fill="#222"/><path d="M1479 199c-3 3-3 9 0 12 2-3 3-8 0-12z" fill="#aaa"/>
<g fill="#d4d0c8" stroke="#404040"><rect x="1773" y="199" width="14" height="12"/><rect x="1788" y="199" width="14" height="12"/><rect x="1806" y="199" width="15" height="12"/></g>
<path d="M1777 208h6" stroke="#000" stroke-width="2"/><rect x="1791" y="201" width="8" height="8" fill="none" stroke="#000" stroke-width="1.4"/><path d="M1810 201l7 8M1817 201l-7 8" stroke="#000" stroke-width="1.4"/>
<g fill="#4c4c4c"><path d="M1474 243h5v5h-3v3h-2zM1489 243h-5v5h3v3h2zM1474 257h5v-3h-3v-3h-2zM1489 257h-5v-3h3v-3h2z"/></g>
<rect x="1475" y="269" width="10" height="10" fill="none" stroke="#ccc"/><path d="M1477 274h6" stroke="#ccc"/>
<path d="M1518 280l5-14h11l-5 14z" fill="#eee"/><path d="M1516 274h14" stroke="#d22" stroke-width="2"/><path d="M1527 271l5 3-5 3z" fill="#d22"/>
<path d="M1514 293l10-6 10 6-10 6z" fill="#aaa" stroke="#222" stroke-dasharray="2 1"/>
<circle cx="1537" cy="273" r="2" fill="none" stroke="#ddd"/><path d="M1537 275v18h18" fill="none" stroke="#ddd"/><circle cx="1557" cy="293" r="2" fill="none" stroke="#ddd"/>
<use href="#cam" x="1523" y="313"/><use href="#cam" x="1523" y="333"/><use href="#cam" x="1523" y="353"/><use href="#cam" x="1523" y="373"/>
<use href="#set" x="1524" y="393"/><use href="#set" x="1524" y="413"/>
<g fill="#ccc"><path d="M1810 274l4-5 4 5zM1810 663l4 5 4-5zM1810 682l4-5 4 5z" /><path d="M1480 694v6l-4-3zM1780 694v6l-4-3zM1794 694v6l4-3z"/></g>
<g fill="#666"><rect x="1622" y="692" width="24" height="2"/><rect x="1622" y="696" width="24" height="2"/><rect x="1622" y="700" width="24" height="2"/></g>
<!-- playback -->
<g fill="#a8a8a8" stroke="#555" stroke-width=".6"><rect x="1700" y="926" width="3" height="13"/><path d="M1711 926v13l-8-6.5zM1717 926v13l-8-6.5z"/><rect x="1727" y="926" width="3" height="13"/><path d="M1742 926v13l-11-6.5z"/><rect x="1756" y="926" width="3" height="13"/><path d="M1770 926v13l-11-6.5z"/><path d="M1798 924v16l-14-8z"/><path d="M1813 924v16l14-8z"/><path d="M1840 926v13l11-6.5z"/><rect x="1849" y="926" width="3" height="13"/><path d="M1868 926v13l11-6.5z"/><rect x="1879" y="926" width="3" height="13"/><path d="M1894 926v13l8-6.5zM1901 926v13l8-6.5z"/><rect x="1909" y="926" width="3" height="13"/></g>
<path d="M1757 922v20M1852 922v20" stroke="#d02020"/>
<!-- range row -->
<path d="M1633 960h8l-4 5z" fill="none" stroke="#999"/><path d="M1756 960h8l-4 5z" fill="none" stroke="#999"/>
<circle cx="1883" cy="962" r="3" fill="none" stroke="#aaa" stroke-width="1.4"/><path d="M1886 962h8v3M1891 962v3" stroke="#aaa" fill="none" stroke-width="1.4"/>
<rect x="1900" y="955" width="14" height="15" fill="#ddd" stroke="#345"/><rect x="1900" y="955" width="14" height="3" fill="#4a7ab0"/><path d="M1902 966l9-6M1903 960l7 8" stroke="#c33"/>
<rect x="1901" y="985" width="13" height="13" fill="#ddd" stroke="#345"/><rect x="1901" y="985" width="13" height="3" fill="#4a7ab0"/><path d="M1903 991h9" stroke="#333" stroke-width="2"/>
<path d="M1904 1032l10-10M1908 1032l6-6M1912 1032l2-2" stroke="#999"/>
<!-- minimized window -->
<rect x="166" y="1015" width="12" height="16" fill="#222"/><path d="M172 1017c-3 3-3 9 0 12 2-3 3-8 0-12z" fill="#aaa"/>
<g fill="#d4d0c8" stroke="#404040"><rect x="265" y="1017" width="14" height="13"/><rect x="282" y="1017" width="14" height="13"/><rect x="299" y="1017" width="15" height="13"/></g>
<path d="M269 1021h5v6h-5zM272 1021v-2h5v5h-3" fill="none" stroke="#000" stroke-width="1.3"/><rect x="285" y="1020" width="8" height="8" fill="none" stroke="#000" stroke-width="1.3"/><path d="M303 1020l7 8M310 1020l-7 8" stroke="#000" stroke-width="1.5"/>
</svg>
<script>
(function(){
var NS="http://www.w3.org/2000/svg",O=[820,485],V2=[2692,-322],V1=[-675,-371],V3=[760,5800],a=1/34.9,b=1/31.5,c=.012;
function P(u,w,h){var D=1+a*u+b*w-c*h;return [(O[0]+a*u*V2[0]+b*w*V1[0]-c*h*V3[0])/D,(O[1]+a*u*V2[1]+b*w*V1[1]-c*h*V3[1])/D];}
function add(g,pts,close){var e=document.createElementNS(NS,close?"polygon":"polyline");e.setAttribute("points",pts.map(function(p){return p[0].toFixed(1)+","+p[1].toFixed(1);}).join(" "));g.appendChild(e);}
var XA=47,XB=1463,YA=188,YB=909;
function seg(g,p,q){var t0=0,t1=1,dx=q[0]-p[0],dy=q[1]-p[1],ps=[-dx,dx,-dy,dy],qs=[p[0]-XA,XB-p[0],p[1]-YA,YB-p[1]];
 for(var n=0;n<4;n++){if(ps[n]==0){if(qs[n]<0)return;continue;}var r=qs[n]/ps[n];if(ps[n]<0){if(r>t1)return;if(r>t0)t0=r;}else{if(r<t0)return;if(r<t1)t1=r;}}
 add(g,[[p[0]+t0*dx,p[1]+t0*dy],[p[0]+t1*dx,p[1]+t1*dy]]);}
var G=document.getElementById("grid"),X=document.getElementById("axes"),W=document.getElementById("wire"),i,j,k;
for(i=-12;i<=12;i++){if(i==0)continue;seg(G,P(i,-12,0),P(i,12,0));seg(G,P(-12,i,0),P(12,i,0));}
seg(X,P(0,-12,0),P(0,12,0));seg(X,P(-12,0,0),P(12,0,0));
var uE=-7.6,uC=3,Rs=1.8,Rb=2.9,w0=-.1,kk=1.136,A=1.5,H=1.32,r=.25,q=.293*r,E=.3;
var prof=[[A/2,0],[A-r,0],[A-q,q],[A,r],[A,H/2],[A,H-r],[A-q,H-q],[A-r,H],[A/2,H],[r,H],[q,H-q],[0,H-r],[0,H/2],[0,r],[q,q],[r,0]];
function M(t,d,h,e){e=e||0;var d2=A/2+(d-A/2)*(A-2*e)/A,h2=H/2+(h-H/2)*(H-2*e)/H,rad,u,w;
 var tt=t<=1?t:(t<=2?1:3-t),wc=w0-.2*(1-tt),wf=1-.1*tt,hf=1+.13*(1-tt),d3=A-(A-d2)*wf,h3=h2*hf;
 if(t<=1){rad=Rs+(Rb-Rs)*t+d3;u=uE+(uC-uE)*t;w=wc+rad;}
 else if(t<=2){var th=Math.PI/2-(t-1)*Math.PI;rad=Rb+d3;u=uC+(kk*rad-.3*(1-d3/A))*Math.cos(th);w=wc+rad*Math.sin(th);}
 else{rad=Rs+(Rb-Rs)*(3-t)+d3;u=uE+(uC-uE)*(3-t);w=wc-rad;}
 return P(u,w,h3);}
var span=uC-uE,ends=[[0,E],[.05/span,.17],[.12/span,.07],[.3/span,0]];
var samples=[];ends.forEach(function(s){samples.push({t:s[0],e:s[1]});});
samples.push({t:1,e:0});for(i=1;i<=36;i++)samples.push({t:1+i/36,e:0});
ends.slice().reverse().forEach(function(s){samples.push({t:3-s[0],e:s[1]});});
for(k=0;k<prof.length;k++){var pl=samples.map(function(s){return M(s.t,prof[k][0],prof[k][1],s.e);});add(W,pl);}
var st=[];ends.forEach(function(s){st.push({t:s[0],e:s[1]});st.push({t:3-s[0],e:s[1]});});
for(i=1;i<=10;i++){st.push({t:i/10,e:0});st.push({t:3-i/10,e:0});}
for(i=1;i<14;i++)st.push({t:1+i/14,e:0});
st.forEach(function(s){add(W,prof.map(function(p){return M(s.t,p[0],p[1],s.e);}),true);});
[0,3].forEach(function(t){[[0,8],[4,12],[1,9],[15,7],[3,13],[5,11]].forEach(function(l){add(W,[M(t,prof[l[0]][0],prof[l[0]][1],E),M(t,prof[l[1]][0],prof[l[1]][1],E)]);});});
})();
</script>
</body></html>
